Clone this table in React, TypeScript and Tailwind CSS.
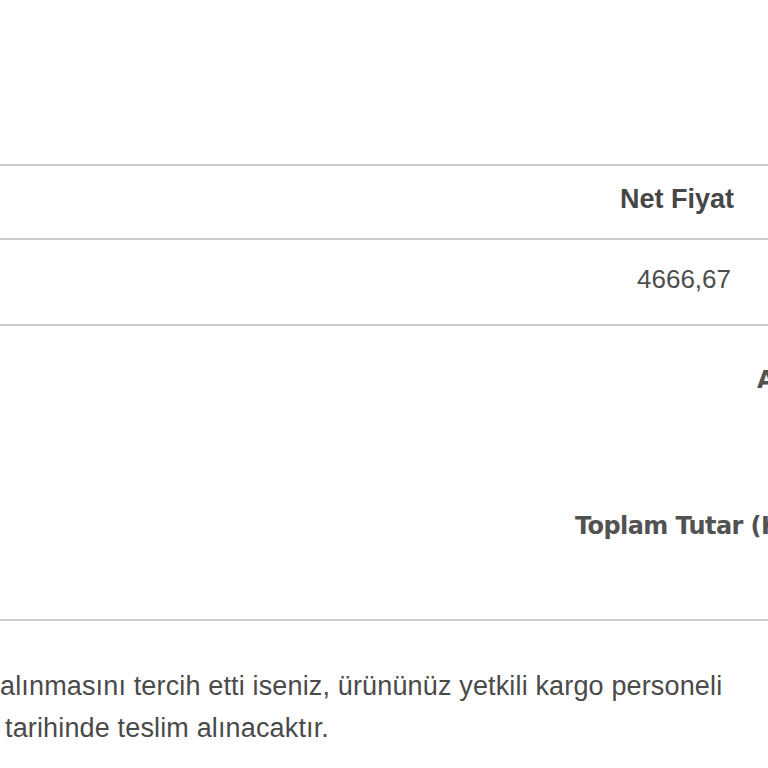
export default function App() {
  return (
    <div className="w-[768px] h-[768px] overflow-hidden bg-white font-['Liberation_Sans',Arial,sans-serif] text-[#4a4a4a]">
      <div className="h-[164px]" />

      {/* table */}
      <div className="w-[1100px]">
        <div className="border-y-2 border-[#cccccc] h-[76px] flex items-center pr-[366px] justify-end">
          <span className="text-[27px] font-bold text-[#464646] pb-[6px] whitespace-nowrap">Net Fiyat</span>
        </div>
        <div className="border-b-2 border-[#cccccc] h-[86px] flex items-center pr-[369px] justify-end">
          <span className="text-[26px] text-[#4d4d4d] pb-[6px] whitespace-nowrap">4666,67</span>
        </div>

        {/* totals */}
        <div className="border-b-2 border-[#cccccc] h-[295px] flex flex-col font-['DejaVu_Sans',Verdana,sans-serif] font-bold text-[24px] text-[#525252] whitespace-nowrap">
          <div className="pl-[757px] pt-[36px]">Ara Toplam (KDV Hariç)</div>
          <div className="pl-[575px] pt-[110px] tracking-[-0.6px]">Toplam Tutar (KDV Dahil)</div>
        </div>
      </div>

      <div className="mt-[44px] text-[27px] leading-[42px] text-[#4a4a4a] whitespace-nowrap tracking-[0.15px]">
        <p>alınmasını tercih etti iseniz, ürününüz yetkili kargo personeli</p>
        <p className="pl-[5px]">tarihinde teslim alınacaktır.</p>
      </div>
    </div>
  );
}
